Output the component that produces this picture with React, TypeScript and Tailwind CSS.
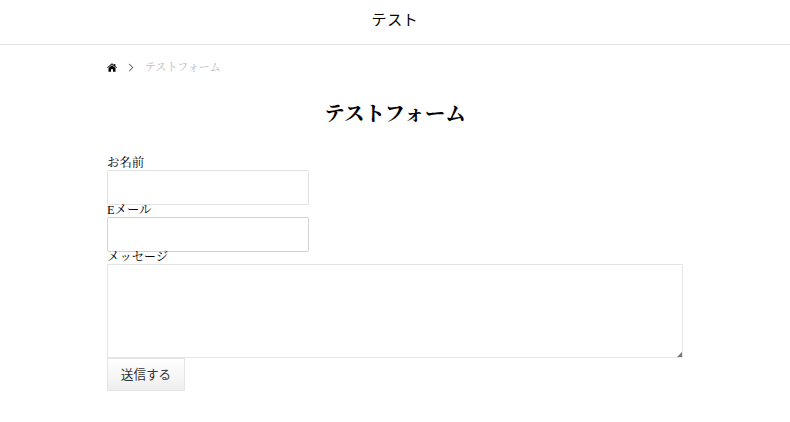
const serif = "font-['Liberation_Serif','Noto_Serif_CJK_JP','Noto_Serif_JP',serif]";
const sans = "font-['Liberation_Sans','Noto_Sans_CJK_JP',sans-serif]";

export default function App() {
  return (
    <div className={`min-h-[422px] bg-white text-black ${serif}`}>
      {/* Header */}
      <header className="flex h-[45px] items-center justify-center border-b border-[#e5e5e5] pb-[6px]">
        <a className={`${sans} text-[15px] leading-none tracking-[0.7px] text-black`}>テスト</a>
      </header>

      <main className="mx-auto w-[576px]">
        {/* Breadcrumb */}
        <nav className="flex h-[43px] items-center pt-[1px] text-[11px] text-[#bbb]">
          <svg viewBox="0 0 12 10" className="h-[9px] w-[10px]" fill="#000">
            <path d="M6 0 L8.6 2.1 V0.8 H10 V3.3 L12 5 L11.3 5.7 L6 1.5 L0.7 5.7 L0 5 Z" />
            <path d="M6 2.4 L10.2 5.7 V10 H7.2 V7 H4.8 V10 H1.8 V5.7 Z" />
          </svg>
          <svg viewBox="0 0 6 10" className="ml-[11px] h-[9px] w-[6px]" fill="none" stroke="#222" strokeWidth="1">
            <path d="M1 1 L5 5 L1 9" />
          </svg>
          <span className="ml-[11px] font-normal">テストフォーム</span>
        </nav>

        <h1 className="mt-[11px] text-center text-[20.6px] font-bold leading-[30px]">テストフォーム</h1>

        {/* Form */}
        <form className="mt-[29px] text-[12.4px] leading-[10px]">
          <label className="block h-[12px]">お名前</label>
          <input className="block h-[35px] w-[202px] rounded-[2px] border border-[#e2e2e2]" />
          <label className="block h-[12px]">Eメール</label>
          <input className="block h-[35px] w-[202px] rounded-[2px] border border-[#d2d2d2]" />
          <label className="block h-[12px]">メッセージ</label>
          <div className="relative h-[94px] w-[576px]">
            <textarea className="block h-full w-full resize-none border border-[#e5e5e5]" />
            <svg viewBox="0 0 5 5" className="absolute bottom-[1px] right-[1px] h-[5px] w-[5px]" fill="#777">
              <path d="M5 0 V5 H0 Z" />
            </svg>
          </div>
          <button
            type="button"
            className={`block h-[33px] w-[78px] border border-[#e5e5e5] bg-gradient-to-b from-white to-[#eee] ${sans} text-[12.6px] text-[#333]`}
          >
            送信する
          </button>
        </form>
      </main>
    </div>
  );
}
